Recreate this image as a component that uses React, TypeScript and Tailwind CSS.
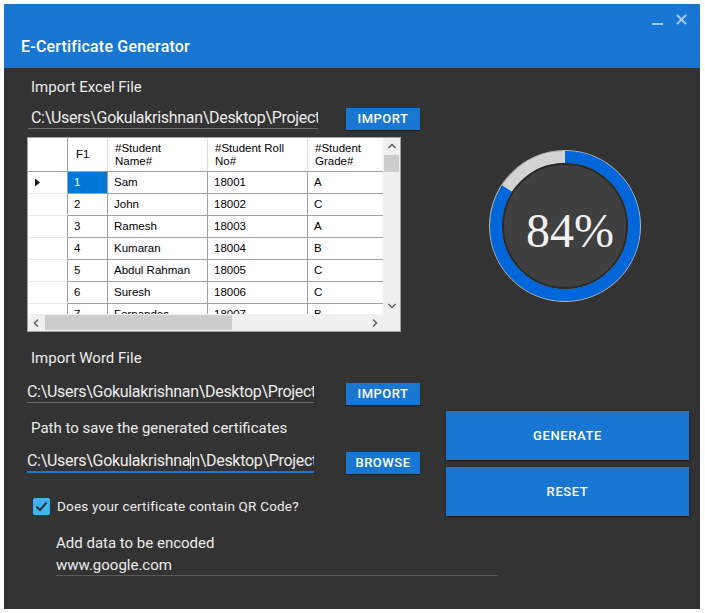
import React from 'react';

const rows = [
  ['1', 'Sam', '18001', 'A'],
  ['2', 'John', '18002', 'C'],
  ['3', 'Ramesh', '18003', 'A'],
  ['4', 'Kumaran', '18004', 'B'],
  ['5', 'Abdul Rahman', '18005', 'C'],
  ['6', 'Suresh', '18006', 'C'],
  ['7', 'Fernandes', '18007', 'B'],
];

const PATH = 'C:\\Users\\Gokulakrishnan\\Desktop\\Project\\';

function Arrow({ dir }: { dir: 'up' | 'down' | 'left' | 'right' }) {
  const d = {
    up: 'M1.5 6 L5 2.5 L8.5 6',
    down: 'M1.5 3 L5 6.5 L8.5 3',
    left: 'M6 1.5 L2.5 5 L6 8.5',
    right: 'M3 1.5 L6.5 5 L3 8.5',
  }[dir];
  return (
    <svg width="10" height="10" viewBox="0 0 10 10">
      <path d={d} fill="none" stroke="#606060" strokeWidth="1.5" />
    </svg>
  );
}

function DataGrid() {
  return (
    <div className="ml-[23px] mt-[7px] w-[374px] h-[195px] border border-[#a0a0a0] bg-white flex flex-col font-['Liberation_Sans',sans-serif] text-[11.5px] text-black">
      <div className="flex h-[176px]">
        <div className="w-[355px] overflow-hidden">
          {/* header */}
          <div className="flex h-[34px] border-b border-[#a0a0a0]">
            <div className="w-[40px] border-r border-[#a0a0a0]" />
            <div className="w-[40px] border-r border-[#e0e0e0] flex items-center pl-[8px]">F1</div>
            <div className="w-[100px] border-r border-[#e0e0e0] flex items-center pl-[7px] leading-[13px]">#Student<br />Name#</div>
            <div className="w-[100px] border-r border-[#e0e0e0] flex items-center pl-[7px] leading-[13px]">#Student Roll<br />No#</div>
            <div className="w-[75px] flex items-center pl-[7px] leading-[13px]">#Student<br />Grade#</div>
          </div>
          {rows.map((r, i) => (
            <div key={r[0]} className="flex h-[22px] shrink-0">
              <div className="w-[40px] border-r border-[#a0a0a0] border-b border-b-[#e6e6e6] flex items-center pl-[6px]">
                {i === 0 && (
                  <svg width="7" height="9" viewBox="0 0 7 9">
                    <path d="M1 0.5 L6 4.5 L1 8.5 Z" fill="#1a1a1a" />
                  </svg>
                )}
              </div>
              <div className="w-[40px] border-r border-b border-[#a0a0a0] flex items-center">
                <div className={`h-full w-full flex items-center pl-[6px] ${i === 0 ? 'bg-[#0078d7] text-white' : ''}`}>{r[0]}</div>
              </div>
              <div className="w-[100px] border-r border-b border-[#a0a0a0] flex items-center pl-[6px]">{r[1]}</div>
              <div className="w-[100px] border-r border-b border-[#a0a0a0] flex items-center pl-[6px]">{r[2]}</div>
              <div className="w-[75px] border-b border-[#a0a0a0] flex items-center pl-[6px]">{r[3]}</div>
            </div>
          ))}
        </div>
        {/* vertical scrollbar */}
        <div className="w-[17px] bg-[#f0f0f0] flex flex-col items-center">
          <div className="h-[17px] flex items-center justify-center"><Arrow dir="up" /></div>
          <div className="w-[15px] h-[17px] bg-[#cdcdcd]" />
          <div className="flex-1" />
          <div className="h-[17px] flex items-center justify-center"><Arrow dir="down" /></div>
        </div>
      </div>
      <div className="flex h-[17px]">
        <div className="w-[355px] bg-[#f0f0f0] flex items-center">
          <div className="w-[17px] h-[17px] flex items-center justify-center"><Arrow dir="left" /></div>
          <div className="w-[187px] h-[15px] bg-[#cdcdcd]" />
          <div className="flex-1" />
          <div className="w-[17px] h-[17px] flex items-center justify-center"><Arrow dir="right" /></div>
        </div>
        <div className="w-[17px] bg-[#f0f0f0]" />
      </div>
    </div>
  );
}

function SmallButton({ label, className = '' }: { label: string; className?: string }) {
  return (
    <div className={`w-[74px] h-[22px] bg-[#1976d2] shadow-[0_1px_1px_rgba(0,0,0,0.4)] flex items-center justify-center text-[13px] font-medium tracking-[0.5px] text-white ${className}`}>
      {label}
    </div>
  );
}

function Progress({ value }: { value: number }) {
  const r = 69;
  const c = 2 * Math.PI * r;
  return (
    <svg width="152" height="152" viewBox="0 0 152 152">
      <circle cx="76" cy="76" r="75.5" fill="none" stroke="#b8b8b8" strokeWidth="1" />
      <circle cx="76" cy="76" r={r} fill="none" stroke="#d3d3d3" strokeWidth="12" />
      <circle
        cx="76"
        cy="76"
        r={r}
        fill="none"
        stroke="#0066d9"
        strokeWidth="12"
        strokeDasharray={`${(c * value) / 100} ${c}`}
        transform="rotate(-90 76 76)"
      />
      <circle cx="76" cy="76" r="62" fill="#404040" stroke="#2a2a2a" strokeWidth="2" />
      <text x="81" y="97" textAnchor="middle" fill="#f2f2f2" fontSize="48" fontFamily="'Liberation Serif', serif">
        {value}%
      </text>
    </svg>
  );
}

export default function App() {
  return (
    <div className="w-[705px] h-[613px] bg-white pt-[4px] pl-[4px] font-['Roboto',sans-serif]">
      <div className="w-[696px] h-[605px] flex flex-col">
        {/* Title bar */}
        <div className="h-[64px] bg-[#1976d2] flex flex-col shrink-0">
          <div className="h-[28px] flex items-start justify-end pr-[13px] gap-[13px] pt-[6px] text-white/60">
            <svg width="11" height="14" viewBox="0 0 11 14" className="mt-[1px]">
              <rect x="0" y="12" width="11" height="2" fill="currentColor" />
            </svg>
            <svg width="11" height="11" viewBox="0 0 11 11" className="mt-[4px]">
              <path d="M1 1 L10 10 M10 1 L1 10" stroke="currentColor" strokeWidth="2" />
            </svg>
          </div>
          <div className="mt-[5px] pl-[17px] h-[20px] leading-[20px] text-[16px] font-medium tracking-[0.2px] text-white">
            E-Certificate Generator
          </div>
        </div>

        {/* Body */}
        <div className="flex-1 bg-[#333333] flex text-[#ececec]">
          {/* Left column */}
          <div className="w-[442px] shrink-0 flex flex-col">
            <div className="mt-[9px] ml-[27px] h-[20px] leading-[20px] text-[15px]">Import Excel File</div>
            <div className="mt-[11px] ml-[24px] flex items-start gap-[28px]">
              <div className="w-[290px] h-[21px] pl-[3px] leading-[20px] text-[16px] tracking-[-0.3px] border-b border-[#6a6a6a] overflow-hidden whitespace-nowrap">
                {PATH}
              </div>
              <SmallButton label="IMPORT" />
            </div>

            <DataGrid />

            <div className="mt-[16px] ml-[27px] h-[20px] leading-[20px] text-[15px]">Import Word File</div>
            <div className="mt-[14px] ml-[23px] flex items-start gap-[32px]">
              <div className="w-[287px] h-[21px] leading-[20px] text-[16px] tracking-[-0.3px] border-b border-[#6a6a6a] overflow-hidden whitespace-nowrap">
                {PATH}
              </div>
              <SmallButton label="IMPORT" className="mt-[1px]" />
            </div>

            <div className="mt-[13px] ml-[27px] h-[20px] leading-[20px] text-[15px]">Path to save the generated certificates</div>
            <div className="mt-[13px] ml-[23px] flex items-start gap-[32px]">
              <div className="w-[287px] h-[22px] leading-[20px] text-[16px] tracking-[-0.3px] border-b-2 border-[#1976d2] overflow-hidden whitespace-nowrap">
                C:\Users\Gokulakrishna<span className="inline-block w-px h-[17px] bg-[#ececec] align-[-3px]" />n\Desktop\Project\
              </div>
              <SmallButton label="BROWSE" className="mt-[1px]" />
            </div>

            <div className="mt-[24px] ml-[29px] flex items-center gap-[7px] h-[17px]">
              <div className="w-[17px] h-[17px] rounded-[2px] bg-[#3fb4f2] flex items-center justify-center">
                <svg width="13" height="11" viewBox="0 0 13 11">
                  <path d="M1.5 5.5 L5 9 L11.5 1.5" fill="none" stroke="#263238" strokeWidth="2" />
                </svg>
              </div>
              <span className="text-[13.5px] tracking-[0.2px] leading-[17px]">Does your certificate contain QR Code?</span>
            </div>

            <div className="mt-[18px] ml-[52px] h-[20px] leading-[20px] text-[15px]">Add data to be encoded</div>
            <div className="mt-[2px] ml-[52px] w-[442px] h-[21px] leading-[20px] text-[15px] border-b border-[#5a5a5a]">
              www.google.com
            </div>
          </div>

          {/* Right column */}
          <div className="flex flex-col pt-[82px]">
            <div className="ml-[43px]">
              <Progress value={84} />
            </div>
            <div className="mt-[109px] w-[243px] h-[49px] bg-[#1976d2] shadow-[0_1px_2px_rgba(0,0,0,0.5)] flex items-center justify-center text-[13px] font-medium tracking-[0.6px] text-white">
              GENERATE
            </div>
            <div className="mt-[7px] w-[243px] h-[49px] bg-[#1976d2] shadow-[0_1px_2px_rgba(0,0,0,0.5)] flex items-center justify-center text-[13px] font-medium tracking-[0.6px] text-white">
              RESET
            </div>
          </div>
        </div>
      </div>
    </div>
  );
}
